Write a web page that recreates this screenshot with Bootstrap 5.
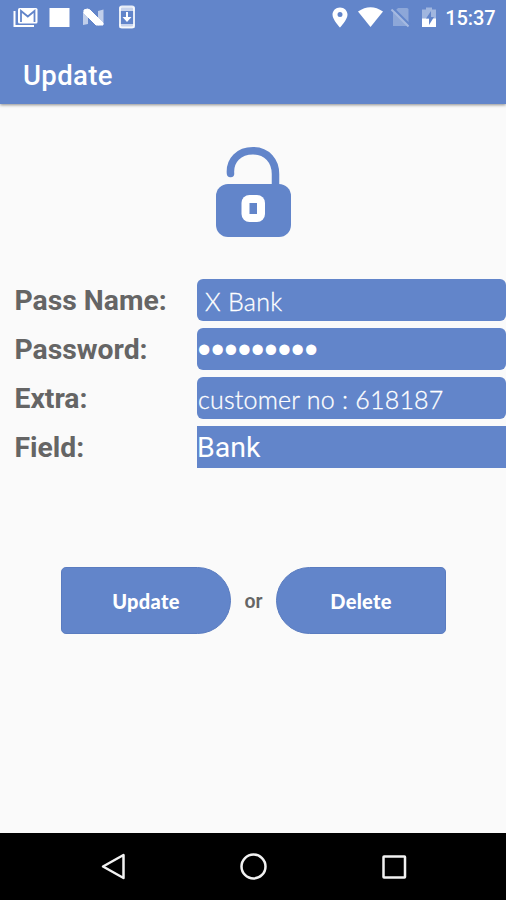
<!DOCTYPE html>
<html lang="en">
<head>
<meta charset="utf-8">
<meta name="viewport" content="width=device-width, initial-scale=1">
<title>Update</title>
<link href="https://cdn.jsdelivr.net/npm/bootstrap@5.3.0/dist/css/bootstrap.min.css" rel="stylesheet">
<style>
  :root { --brand: #6285ca; }
  body { font-family: Roboto, sans-serif; background: #fafafa; color: #656565; }
  .screen { height: 900px; }
  .brand-bg { background: var(--brand); color: #fff; }
  .top { height: 104px; box-shadow: 0 1px 3px rgba(0,0,0,.45); }
  .status { height: 35px; padding: 0 10.5px 0 12px; }
  .clock { font-size: 20px; font-weight: 500; line-height: 35px; letter-spacing: -.1px; margin-left: 7px; padding-top: 1px; }
  .title { font-size: 27.5px; font-weight: 500; line-height: 32px; padding: 25px 0 0 23px; letter-spacing: .35px; }
  .lock { padding-top: 42px; height: 175px; }
  .fields { gap: 7.2px; }
  .field { height: 41.8px; }
  .field-name { width: 197px; padding-left: 14.5px; font-size: 28.3px; font-weight: 700; line-height: 44px; white-space: nowrap; }
  .field-value { height: 100%; border-radius: 6px; font-family: Lato, sans-serif; font-weight: 300; font-size: 25px; line-height: 44px; white-space: pre; overflow: hidden; -webkit-text-stroke: .3px #fff; }
  .v-name { padding-left: 8px; letter-spacing: .3px; }
  .v-extra { letter-spacing: .22px; padding-left: 1px; }
  .v-dots { font-family: "Liberation Sans", sans-serif; font-size: 38px; line-height: 44px; letter-spacing: .05px; padding-left: .6px; -webkit-text-stroke: 0; }
  .v-spinner { border-radius: 0; font-family: Roboto, sans-serif; font-weight: 400; font-size: 28.5px; line-height: 43px; -webkit-text-stroke: 0; }
  .actions { padding: 99.500px 0 0 61px; }
  .action { width: 170px; height: 67px; border: 1px solid #5a7cc0; font-family: Lato, sans-serif; font-weight: 900; font-size: 20px; letter-spacing: .3px; padding: 0; color: #fff; }
  .action-l { border-radius: 5px 34px 34px 5px; }
  .action-r { border-radius: 34px 5px 5px 34px; }
  .or-text { width: 45px; font-size: 19.5px; font-weight: 600; padding-top: 1px; }
  .nav-keys { height: 67px; }
</style>
</head>
<body>
<div class="screen d-flex flex-column overflow-hidden">
  <header class="top brand-bg flex-shrink-0">
    <div class="status d-flex align-items-center justify-content-between">
      <svg width="126" height="35" viewBox="12 0 126 35">
        <path d="M14.500 11V26H34" fill="none" stroke="#fff" stroke-width="2"/>
        <rect x="18" y="8" width="19.500" height="15.500" rx="1.500" fill="#fff"/>
        <path d="M21 22V11l6.800 5.500L34.500 11V22" fill="none" stroke="#6285ca" stroke-width="1.800"/>
        <rect x="49.500" y="8" width="20" height="19" fill="#fff"/>
        <path d="M83 12l5-2v14l-5 1zM98 11l5.500-1.500V24l-5.500 1.500z" fill="#fff" opacity=".6"/>
        <path d="M84 10q4-2 6 0l13 13v2h-7L84 13z" fill="#fff" stroke="#fff"/>
        <rect x="120" y="6.500" width="14" height="21" rx="2" fill="none" stroke="#fff" stroke-width="2" opacity=".85"/>
        <path d="M119.500 7h15v4h-15zM119.500 24h15v4h-15z" fill="#fff" opacity=".65"/>
        <path d="M126 12h2v5h3.500L127 22l-4.500-5h3.500z" fill="#fff"/>
      </svg>
      <div class="d-flex align-items-center">
        <svg width="107" height="35" viewBox="331 0 107 35">
          <path d="M340 7.500c-4.300 0-7.500 3.200-7.500 7.200 0 5 7.500 12.800 7.500 12.800s7.500-7.800 7.500-12.800c0-4-3.200-7.200-7.500-7.200zm0 4.500a2.500 2.500 0 1 1 0 5 2.500 2.500 0 0 1 0-5z" fill="#fff"/>
          <path d="M358 11.500q12.500-8.500 25 0L370.500 27z" fill="#fff"/>
          <path d="M398 8h9q1.500 0 1.500 1.500V26H393V13z" fill="#fff" opacity=".28"/>
          <path d="M393 8L410 25" stroke="#6285ca" stroke-width="2"/>
          <path d="M391.500 9.500L408.500 26.500" stroke="#a5b9e1" stroke-width="2"/>
          <path d="M422 9.500h4v-2h6v2h4V20h-14z" fill="#fff" opacity=".4"/>
          <path d="M422 18.500h14V27h-14z" fill="#fff"/>
          <path d="M431 11l-5 7.500h3V25l5-8h-3z" fill="#6285ca"/>
        </svg>
        <span class="clock">15:37</span>
      </div>
    </div>
    <div class="title">Update</div>
  </header>

  <main class="flex-grow-1">
    <div class="lock text-center">
      <svg class="d-block mx-auto" width="78" height="92" viewBox="214 146 78 92">
        <path d="M230.500 173.500C229.500 160 239 150.700 253 150.700S275.500 161 275.500 174V188" fill="none" stroke="#6285ca" stroke-width="7.500" stroke-linecap="round"/>
        <rect x="216" y="184" width="75" height="53" rx="12" fill="#6285ca"/>
        <rect x="241.500" y="195" width="23.500" height="27" rx="8" fill="#fff"/>
        <rect x="249.500" y="203" width="7.500" height="11" fill="#6285ca"/>
      </svg>
    </div>

    <div class="fields d-flex flex-column">
      <div class="field d-flex"><div class="field-name flex-shrink-0">Pass Name:</div><div class="field-value v-name brand-bg flex-grow-1">X Bank</div></div>
      <div class="field d-flex"><div class="field-name flex-shrink-0">Password:</div><div class="field-value v-dots brand-bg flex-grow-1">•••••••••</div></div>
      <div class="field d-flex"><div class="field-name flex-shrink-0">Extra:</div><div class="field-value v-extra brand-bg flex-grow-1">customer no : 618187</div></div>
      <div class="field d-flex"><div class="field-name flex-shrink-0">Field:</div><div class="field-value v-spinner brand-bg flex-grow-1">Bank</div></div>
    </div>

    <div class="actions d-flex align-items-center">
      <button type="button" class="btn action action-l brand-bg">Update</button>
      <span class="or-text text-center">or</span>
      <button type="button" class="btn action action-r brand-bg">Delete</button>
    </div>
  </main>

  <footer class="nav-keys bg-black flex-shrink-0">
    <svg class="d-block" width="506" height="67" viewBox="0 833 506 67" fill="none" stroke="#f2f2f2" stroke-width="2.500">
      <path d="M103 866.500L123.500 855V878z" stroke-linejoin="round"/>
      <circle cx="253.500" cy="866.500" r="12"/>
      <rect x="383.500" y="856.500" width="21.500" height="21" rx=".5"/>
    </svg>
  </footer>
</div>
<script src="https://cdn.jsdelivr.net/npm/bootstrap@5.3.0/dist/js/bootstrap.bundle.min.js"></script>
</body>
</html>
